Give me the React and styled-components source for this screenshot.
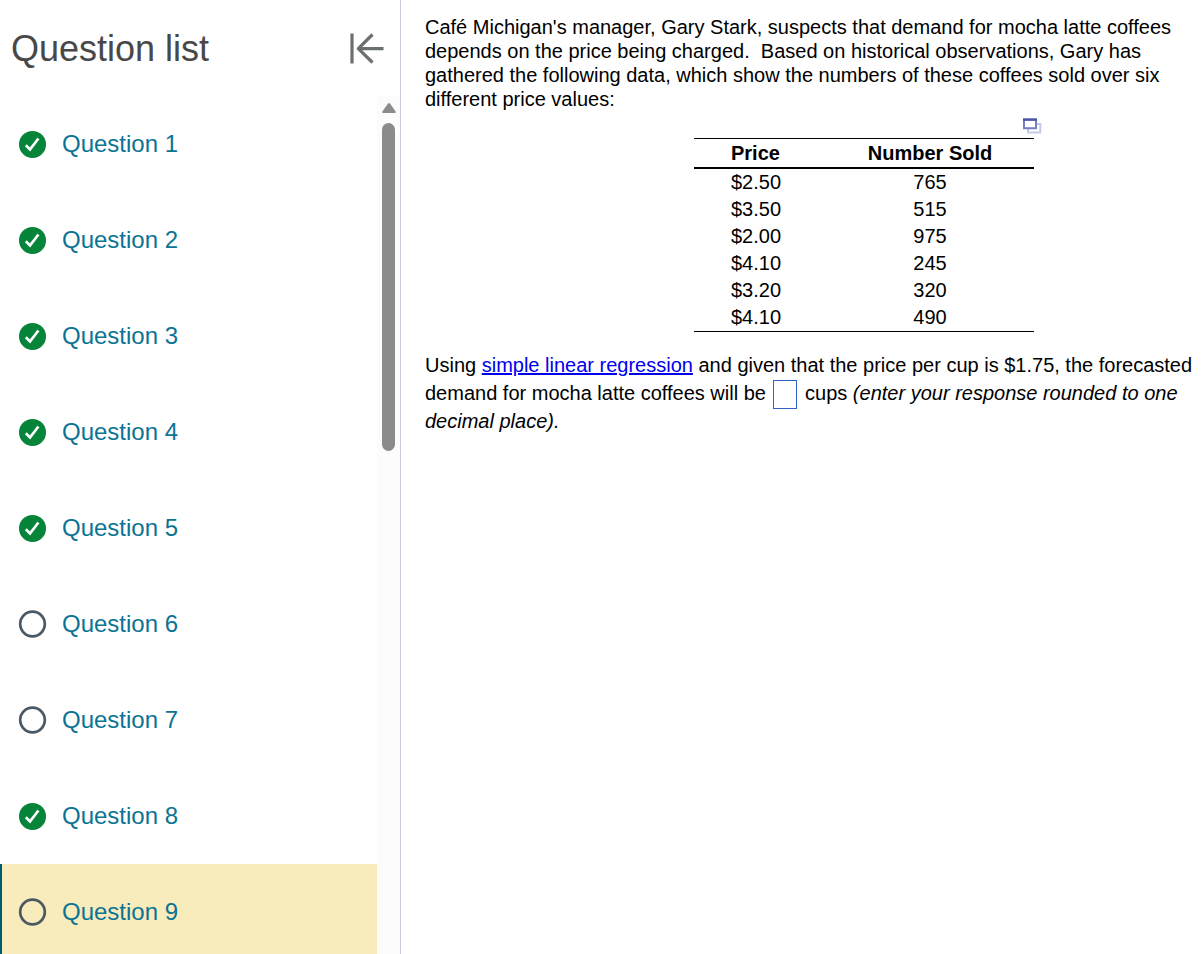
import React from "react";
import styled, { createGlobalStyle } from "styled-components";

const GlobalStyle = createGlobalStyle`
  * {
    box-sizing: border-box;
  }

  body {
    margin: 0;
    background: #ffffff;
    color: #000000;
    font-family: "Liberation Sans", Arial, sans-serif;
  }
`;

const Page = styled.div`
  display: flex;
  height: 100vh;
  overflow: hidden;
`;

const Sidebar = styled.aside`
  display: flex;
  flex-direction: column;
  flex: 0 0 401px;
  border-right: 1px solid #c7cbdd;
`;

const SidebarHeader = styled.header`
  display: flex;
  align-items: center;
  justify-content: space-between;
  flex: 0 0 96px;
  padding: 2px 16px 0 11px;
`;

const SidebarTitle = styled.h1`
  margin: 0;
  color: #484848;
  font-size: 36px;
  font-weight: 400;
`;

const IconButton = styled.button`
  display: flex;
  padding: 0;
  border: 0;
  background: none;
  cursor: pointer;
`;

const ListArea = styled.div`
  display: flex;
  flex: 1;
  min-height: 0;
`;

const QuestionList = styled.ul`
  flex: 1;
  margin: 0;
  padding: 0;
  overflow: hidden;
  list-style: none;
`;

const QuestionItem = styled.li`
  display: flex;
  align-items: center;
  gap: 15px;
  height: 96px;
  padding-left: 16px;
  border-left: 2px solid ${({ $current }) => ($current ? "#005a70" : "transparent")};
  background: ${({ $current }) => ($current ? "#f8ebbc" : "transparent")};
`;

const QuestionLink = styled.a`
  color: #0b7394;
  font-size: 24px;
  text-decoration: none;
`;

const ScrollTrack = styled.div`
  display: flex;
  flex-direction: column;
  align-items: center;
  flex: 0 0 23px;
  gap: 10px;
  padding-top: 7px;
  background: #fcfcfc;
`;

const ScrollThumb = styled.div`
  width: 13px;
  height: 328px;
  border-radius: 7px;
  background: #8b8b8b;
`;

const Content = styled.main`
  flex: 1;
  min-width: 0;
  padding: 15px 8px 15px 24px;
  font-size: 20px;
`;

const Intro = styled.p`
  margin: 0;
  line-height: 24px;
`;

const Figure = styled.div`
  display: flex;
  flex-direction: column;
  width: 340px;
  margin: 7px 159px 0 auto;
`;

const PopoutButton = styled(IconButton)`
  align-self: flex-end;
  margin: 0 -8px 4px 0;
`;

const DataTable = styled.table`
  width: 100%;
  border-top: 1px solid #000000;
  border-bottom: 1px solid #000000;
  border-collapse: collapse;
  line-height: 27px;

  th,
  td {
    padding: 0;
    text-align: center;
  }

  th {
    border-bottom: 2px solid #000000;
    line-height: 28px;
  }

  th:first-child,
  td:first-child {
    width: 132px;
    padding-left: 37px;
    text-align: left;
  }
`;

const Prompt = styled.p`
  margin: 19px 0 0;
  line-height: 28px;
`;

const HelpLink = styled.a`
  color: #0000ee;
`;

const AnswerInput = styled.input`
  width: 24px;
  height: 29px;
  margin: -4px 2px;
  padding: 0 2px;
  border: 1px solid #2f62c4;
  background: #ffffff;
  font: inherit;
  vertical-align: middle;
`;

const questions = [
  { id: 1, done: true },
  { id: 2, done: true },
  { id: 3, done: true },
  { id: 4, done: true },
  { id: 5, done: true },
  { id: 6, done: false },
  { id: 7, done: false },
  { id: 8, done: true },
  { id: 9, done: false, current: true },
];

const sales = [
  ["$2.50", 765],
  ["$3.50", 515],
  ["$2.00", 975],
  ["$4.10", 245],
  ["$3.20", 320],
  ["$4.10", 490],
];

function StatusIcon({ done }) {
  if (done) {
    return (
      <svg width="29" height="28" viewBox="0 0 29 28" role="img" aria-label="Completed">
        <circle cx="14.5" cy="14.4" r="13.5" fill="#068439" />
        <path d="M7.8 15.2l4.2 4.3 8.4-11" fill="none" stroke="#ffffff" strokeWidth="2.7" />
      </svg>
    );
  }
  return (
    <svg width="29" height="28" viewBox="0 0 29 28" role="img" aria-label="Not completed">
      <circle cx="14.5" cy="14" r="12.3" fill="none" stroke="#4b5964" strokeWidth="2.7" />
    </svg>
  );
}

function CollapseIcon() {
  return (
    <svg
      width="36"
      height="32"
      viewBox="0 0 36 32"
      fill="none"
      stroke="#6a706e"
      strokeWidth="3.2"
      strokeLinejoin="round"
    >
      <path d="M4 .5v30M35.500 15.600H10M24.500 1.500L10.300 15.600l14.200 13.900" />
    </svg>
  );
}

function PopoutIcon() {
  return (
    <svg width="20" height="16" viewBox="0 0 20 16">
      <path d="M6 6h12.300v8.500H6z" fill="#ffffff" stroke="#c5c9e8" strokeWidth="2" />
      <path d="M2 1.500h12v8.700H2z" fill="#ffffff" stroke="#7580c2" strokeWidth="2" />
      <path d="M1 .5h14v2.300H1z" fill="#4855a8" />
    </svg>
  );
}

export default function App() {
  return (
    <>
      <GlobalStyle />
      <Page>
        <Sidebar>
          <SidebarHeader>
            <SidebarTitle>Question list</SidebarTitle>
            <IconButton aria-label="Collapse question list">
              <CollapseIcon />
            </IconButton>
          </SidebarHeader>
          <ListArea>
            <QuestionList>
              {questions.map(({ id, done, current }) => (
                <QuestionItem key={id} $current={current}>
                  <StatusIcon done={done} />
                  <QuestionLink href={`#question-${id}`}>Question {id}</QuestionLink>
                </QuestionItem>
              ))}
            </QuestionList>
            <ScrollTrack>
              <svg width="14" height="10" viewBox="0 0 14 10">
                <path d="M6 .6q1-1.1 2 0l5.6 8q.7 1.4-.8 1.4H1.2Q-.3 10 .4 8.600z" fill="#8b8b8b" />
              </svg>
              <ScrollThumb />
            </ScrollTrack>
          </ListArea>
        </Sidebar>
        <Content>
          <Intro>
            Café Michigan's manager, Gary Stark, suspects that demand for mocha latte coffees depends
            on the price being charged.{"\u00a0 "}Based on historical observations, Gary has gathered
            the following data, which show the numbers of these coffees sold over six different price
            values:
          </Intro>
          <Figure>
            <PopoutButton aria-label="Open table in a new window">
              <PopoutIcon />
            </PopoutButton>
            <DataTable>
              <thead>
                <tr>
                  <th>Price</th>
                  <th>Number Sold</th>
                </tr>
              </thead>
              <tbody>
                {sales.map(([price, sold], index) => (
                  <tr key={index}>
                    <td>{price}</td>
                    <td>{sold}</td>
                  </tr>
                ))}
              </tbody>
            </DataTable>
          </Figure>
          <Prompt>
            Using <HelpLink href="#simple-linear-regression">simple linear regression</HelpLink> and
            given that the price per cup is $1.75, the forecasted demand for mocha latte coffees will
            be <AnswerInput type="text" aria-label="Forecasted demand in cups" /> cups{" "}
            <em>(enter your response rounded to one decimal place).</em>
          </Prompt>
        </Content>
      </Page>
    </>
  );
}
